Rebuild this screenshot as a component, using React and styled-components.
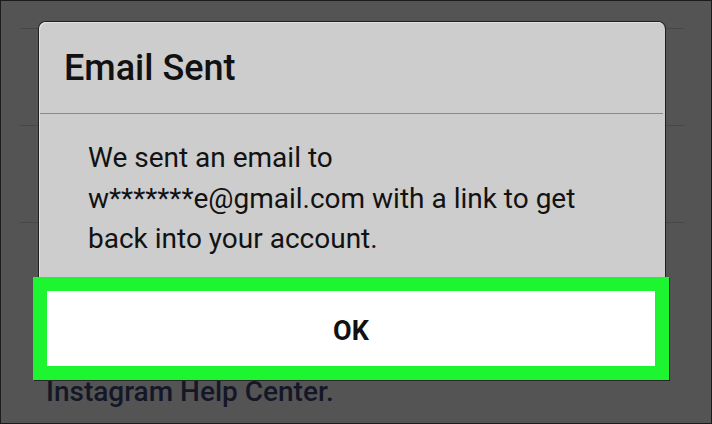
import React from "react";
import styled, { createGlobalStyle } from "styled-components";

const GlobalStyle = createGlobalStyle`
  html, body {
    margin: 0;
    padding: 0;
    background: #545454;
  }
  * {
    box-sizing: border-box;
  }
`;

function App() {
  return (
    <>
      <GlobalStyle />
      <Screen>
        <Backdrop>
          <Rule />
          <Rule />
          <Rule />
          <HelpLink>Instagram Help Center.</HelpLink>
        </Backdrop>

        <Dialog>
          <DialogHeader>
            <Title>Email Sent</Title>
          </DialogHeader>
          <Divider />
          <Message>
            We sent an email to
            <br />
            w*******e@gmail.com with a link to get
            <br />
            back into your account.
          </Message>
          <Highlight>
            <OkButton>OK</OkButton>
          </Highlight>
        </Dialog>
      </Screen>
    </>
  );
}

/*CSS for the screen*/
const Screen = styled.div`
  position: relative;
  width: 712px;
  height: 424px;
  border: 1px solid #1c1c1c;
  background: #545454;
  overflow: hidden;
  font-family: Roboto, "Noto Sans", sans-serif;
`;

const Backdrop = styled.div`
  display: flex;
  flex-direction: column;
  gap: 96px;
  padding: 27px 27px 0 19px;
`;

const Rule = styled.div`
  height: 1px;
  background: #474747;
`;

const HelpLink = styled.div`
  margin-top: 57px;
  padding-left: 26px;
  font-size: 28px;
  line-height: 32px;
  font-weight: 500;
  color: #141727;
  white-space: nowrap;
`;

/*CSS for the dialog*/
const Dialog = styled.div`
  position: absolute;
  left: 38px;
  top: 21px;
  width: 626px;
  display: flex;
  flex-direction: column;
  background: #cdcdcd;
  border-radius: 7px 7px 0 0;
  box-shadow: 0 0 0 1px #1f1f1f, inset 1px 1px 0 #e2e2e2;
`;

const DialogHeader = styled.div`
  height: 91px;
  padding-left: 25px;
  display: flex;
  align-items: center;
`;

const Title = styled.h2`
  margin: 0;
  font-size: 36px;
  line-height: 40px;
  font-weight: 500;
  color: #111111;
`;

const Divider = styled.div`
  height: 1px;
  margin: 0 2px 0 1px;
  background: #8a8a8a;
`;

const Message = styled.p`
  margin: 0;
  padding: 24px 20px 17px 49px;
  font-size: 28px;
  line-height: 40.5px;
  color: #121212;
  white-space: nowrap;
`;

const Highlight = styled.div`
  margin: 0 -4px 0 -6px;
  border: 14px solid #1ef531;
  box-shadow: 1px 1px 0 #2a2a2a;
`;

const OkButton = styled.button`
  display: flex;
  align-items: center;
  justify-content: center;
  width: 100%;
  height: 75px;
  padding: 6px 0 0 0;
  border: none;
  background: #ffffff;
  font-family: Roboto, "Noto Sans", sans-serif;
  font-size: 27px;
  font-weight: bold;
  color: #111111;
  cursor: pointer;
`;

export default App;
